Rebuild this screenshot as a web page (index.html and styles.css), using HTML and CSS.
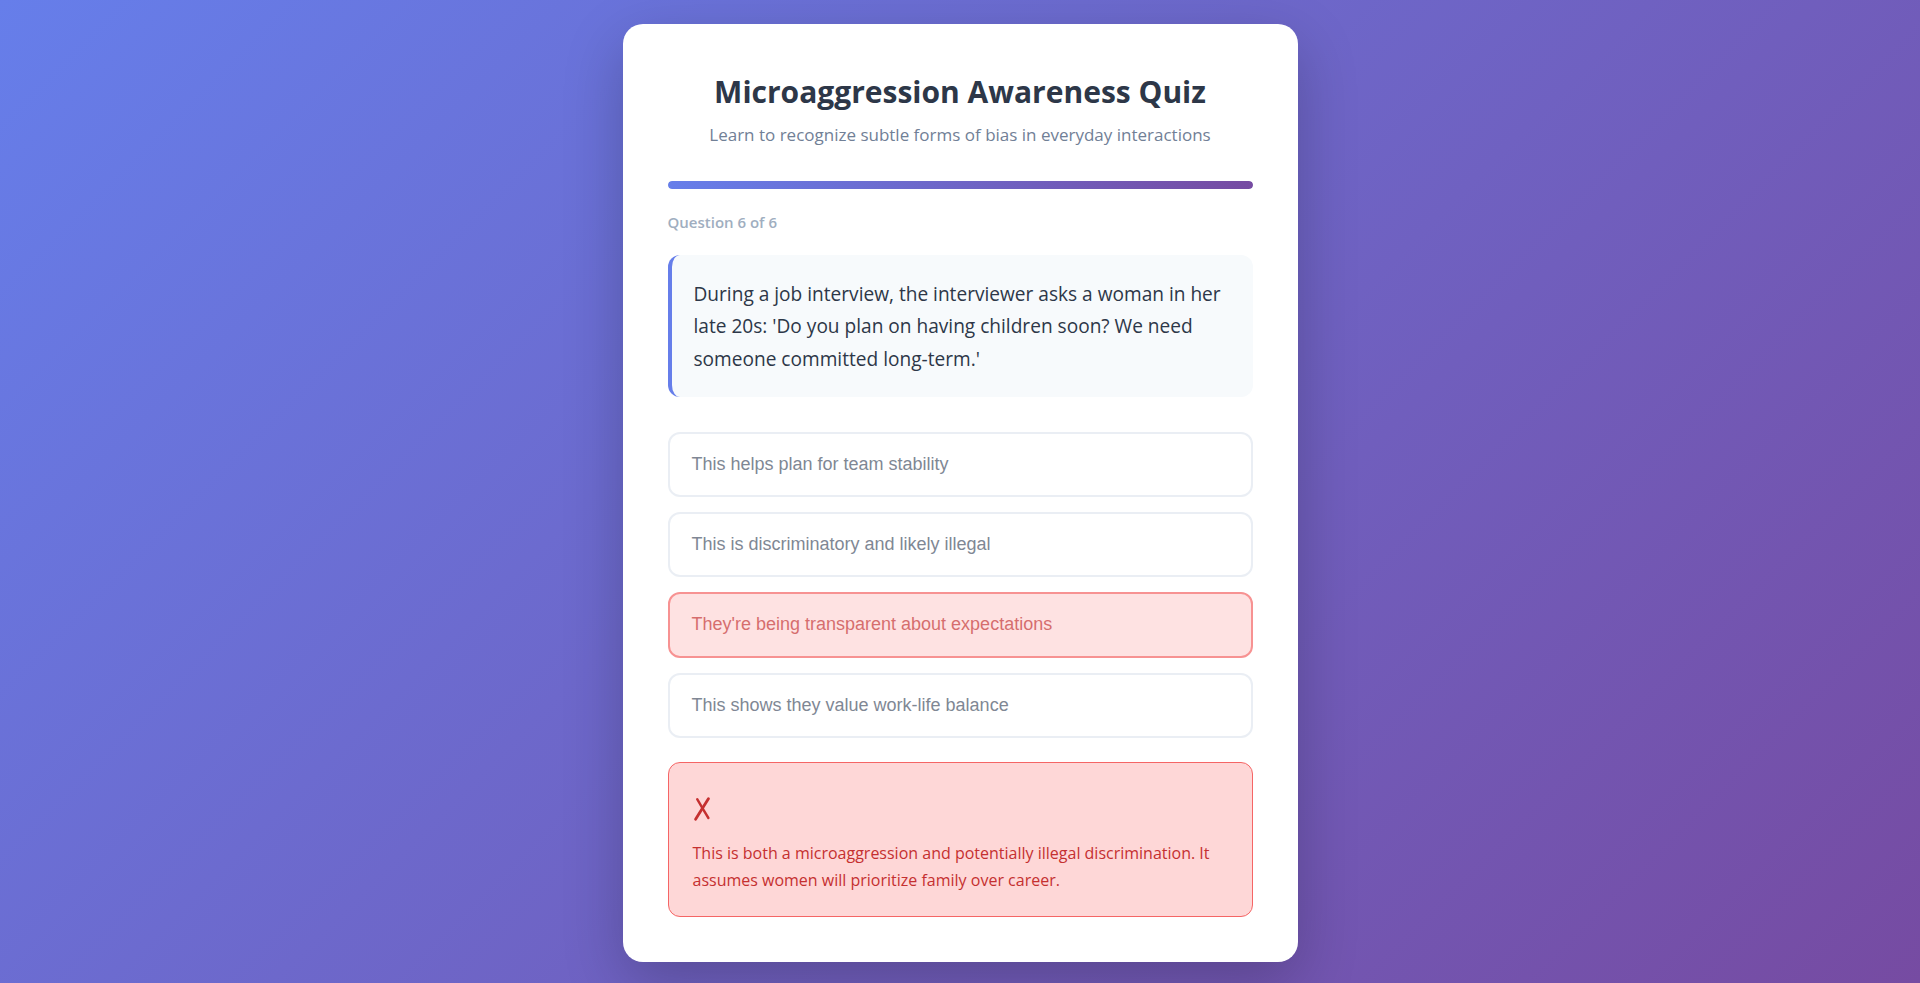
FILE: index.html
```html
<!DOCTYPE html>
<html lang="en">
<head>
<meta charset="utf-8">
<title>Microaggression Awareness Quiz</title>
<link rel="stylesheet" href="styles.css">
</head>
<body>
<main class="card">
  <header class="header">
    <h1 class="title">Microaggression Awareness Quiz</h1>
    <p class="subtitle">Learn to recognize subtle forms of bias in everyday interactions</p>
  </header>

  <div class="progress"><div class="progress-fill" style="width:100%"></div></div>

  <div class="counter">Question 6 of 6</div>

  <div class="scenario">During a job interview, the interviewer asks a woman in her late 20s: 'Do you plan on having children soon? We need someone committed long-term.'</div>

  <div class="options">
    <button class="option" disabled>This helps plan for team stability</button>
    <button class="option" disabled>This is discriminatory and likely illegal</button>
    <button class="option option-wrong" disabled>They're being transparent about expectations</button>
    <button class="option" disabled>This shows they value work-life balance</button>
  </div>

  <div class="feedback feedback-wrong">
    <div class="feedback-icon" aria-label="Incorrect">
      <svg class="icon-x" width="18" height="24" viewBox="0 0 18 24" aria-hidden="true">
        <path d="M4.2 2.2 Q9.5 11.5 15.4 21" fill="none" stroke="currentColor" stroke-width="2.4" stroke-linecap="round"/>
        <path d="M15.4 1.8 Q10 10.5 2.6 22.2" fill="none" stroke="currentColor" stroke-width="2.8" stroke-linecap="round"/>
      </svg>
    </div>
    <p class="feedback-text">This is both a microaggression and potentially illegal discrimination. It assumes women will prioritize family over career.</p>
  </div>
</main>
</body>
</html>
```
FILE: styles.css
```css
* { box-sizing: border-box; }

html, body {
  margin: 0;
  height: 100%;
}

body {
  background: linear-gradient(135deg, #667eea 0%, #764ba2 100%);
  font-family: "Open Sans", "Noto Sans", sans-serif;
  color: #2d3748;
  padding-top: 24px;
  overflow: hidden;
}

.card {
  width: 675px;
  margin: 0 auto;
  background: #ffffff;
  border-radius: 20px;
  padding: 45px;
  box-shadow: 0 20px 60px rgba(0, 0, 0, 0.22);
}

.header {
  text-align: center;
}

.title {
  margin: 0;
  font-size: 30px;
  line-height: 45px;
  font-weight: 700;
  color: #2d3748;
}

.subtitle {
  margin: 7px 0 0;
  font-size: 17px;
  line-height: 27px;
  color: #718096;
}

.progress {
  margin-top: 32.7px;
  height: 8px;
  border-radius: 4px;
  background: #e2e8f0;
  overflow: hidden;
}

.progress-fill {
  height: 100%;
  border-radius: 4px;
  background: linear-gradient(90deg, #667eea 0%, #764ba2 100%);
}

.counter {
  margin-top: 23.5px;
  font-size: 15px;
  line-height: 20px;
  font-weight: 600;
  color: #a0aec0;
}

.scenario {
  margin-top: 22.8px;
  background: #f7fafc;
  border-left: 4px solid #667eea;
  border-radius: 12px;
  padding: 23px 22px 21.5px 22px;
  font-size: 19.1px;
  line-height: 32.5px;
  color: #2d3748;
}

.options {
  margin-top: 34.7px;
  display: flex;
  flex-direction: column;
  gap: 15px;
}

.option {
  display: block;
  width: 100%;
  text-align: left;
  background: #ffffff;
  border: 2px solid #e2e8f0;
  border-radius: 12px;
  padding: 20px 22px;
  font-family: "Liberation Sans", Arial, sans-serif;
  font-size: 18px;
  line-height: 21.33px;
  color: #4a5568;
  opacity: 0.7;
  cursor: default;
}

.option-wrong {
  background: #fed7d7;
  border-color: #f56565;
  color: #c53030;
}

.feedback {
  margin-top: 24.3px;
  border-radius: 12px;
  padding: 24px 24px 22px;
}

.feedback-wrong {
  background: #fed7d7;
  border: 1px solid #f56565;
  color: #c53030;
}

.feedback-icon {
  padding-top: 9.4px;
  margin-bottom: 19.7px;
  color: #c53030;
}

.icon-x {
  display: block;
}

.feedback-text {
  margin: 0;
  font-size: 16px;
  line-height: 26.7px;
}
```
